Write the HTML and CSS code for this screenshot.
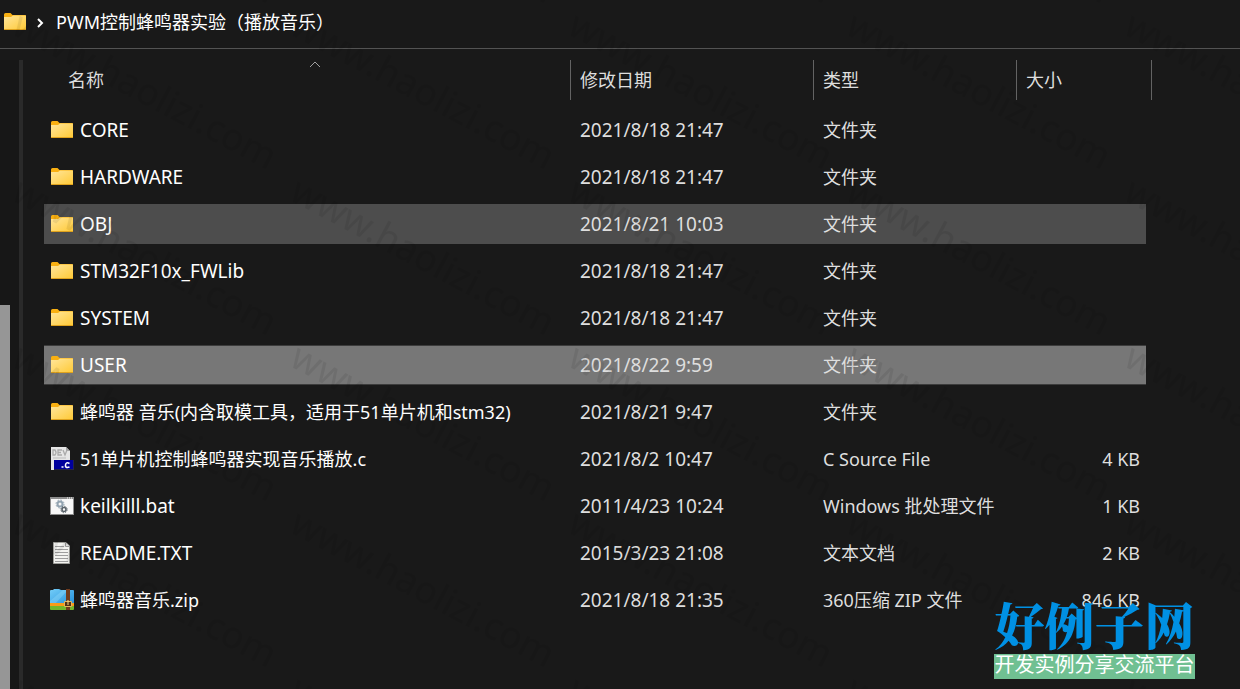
FILE: index.html
```html
<!DOCTYPE html>
<html lang="zh-CN">
<head>
  <meta charset="UTF-8" />
  <meta name="viewport" content="width=device-width, initial-scale=1.0"/>
  <title>PWM控制蜂鸣器实验（播放音乐）</title>
  <link rel="stylesheet" href="styles.css">
</head>
<body>
  <svg class="sprite" aria-hidden="true">
    <defs>
      <linearGradient id="folderFill" x1="0" y1="0" x2="1" y2="1">
        <stop offset="0" stop-color="#ffe69c"/>
        <stop offset="1" stop-color="#ffca38"/>
      </linearGradient>
      <linearGradient id="zipFill" x1="0" y1="0" x2="1" y2="1">
        <stop offset="0" stop-color="#74cdf8"/>
        <stop offset="1" stop-color="#2190dc"/>
      </linearGradient>
      <symbol id="folder" viewBox="0 0 24 24">
        <path d="M1 4.500Q1 3 2.500 3H7.500L9.500 5H22Q23 5 23 6V19H1Z" fill="#f9b012"/>
        <path d="M1 7H8L10 5.500H23V19H1Z" fill="url(#folderFill)"/>
        <path d="M1 19.500H23" stroke="#dfa21d"/>
      </symbol>
      <symbol id="csource" viewBox="0 0 24 24">
        <path d="M1 0H16L20 4V23H1Z" fill="#e6e6e6"/>
        <path d="M16 0V4H20Z" fill="#a5a5a5"/>
        <path d="M3 3v5h2q2-2.500 0-5zM12 3H8v5h4M8 5.500h3M13 3l2 5 2-5" fill="none" stroke="#aaa" stroke-width="1.300"/>
        <path d="M3 11H16" stroke="#bbb"/>
        <path d="M4 13H24V23H4Z" fill="#00009c"/>
        <path d="M4 22.500H24M23.500 13V23" stroke="#24244a"/>
        <path d="M19.500 16.500Q16 14.500 15.500 18T19.500 20M11.500 20H13.500" fill="none" stroke="#fff" stroke-width="1.600"/>
      </symbol>
      <symbol id="batch" viewBox="0 0 24 24">
        <path d="M0 3H24V21H0Z" fill="#8d8d8d"/>
        <path d="M1 5H23V20H1Z" fill="#f8f8f8"/>
        <path d="M17 4h1M19 4h1M21 4h1" stroke="#fff"/>
        <circle cx="10" cy="10" r="2.500" fill="none" stroke="#93a4b1" stroke-width="2"/>
        <circle cx="10" cy="10" r="4" fill="none" stroke="#93a4b1" stroke-dasharray="1.600 1.540"/>
        <circle cx="14" cy="15.500" r="2" fill="none" stroke="#596269" stroke-width="1.600"/>
        <circle cx="14" cy="15.500" r="3.200" fill="none" stroke="#596269" stroke-dasharray="1.300 1.200"/>
      </symbol>
      <symbol id="text" viewBox="0 0 24 24">
        <path d="M3.500 1.500H16L19.500 5V22.500H3.500Z" fill="#f3f3f0" stroke="#a0a09c"/>
        <path d="M15.500 1.500V5.500H19.500" fill="#ddd" stroke="#999"/>
        <path d="M5 5.500H14M5 8.500H18M5 11.500H18M5 14.500H18M5 17.500H18M5 20.500H18" stroke="#9e9e9e"/>
      </symbol>
      <symbol id="zip" viewBox="0 0 24 24">
        <path d="M0 3Q0 2 1 2H3L4 1H9L11 2H23Q24 2 24 3V17H0Z" fill="url(#zipFill)"/>
        <path d="M0 13L13 2H18L4 17H0Z" fill="#9adffc" opacity=".35"/>
        <path d="M0 15H24V19H0Z" fill="#f99b18"/>
        <path d="M0 18H24V21Q24 22 23 22H1Q0 22 0 21Z" fill="#73b52b"/>
        <path d="M16 1H20V22H16Z" fill="#713b1d"/>
        <path d="M14.500 13.500H21.500V18.500H14.500Z" fill="#533016" stroke="#e5b65e"/>
        <path d="M18 12V17" stroke="#f8d98a"/>
      </symbol>
    </defs>
  </svg>

  <nav class="address" aria-label="地址">
    <svg class="icon" aria-hidden="true"><use href="#folder"/></svg>
    <svg class="chevron" viewBox="0 0 8 10" aria-hidden="true"><path d="M2 1L6 5L2 9"/></svg>
    <a href="#">PWM控制蜂鸣器实验（播放音乐）</a>
  </nav>

  <main class="explorer">
    <aside class="side"><div class="thumb"></div></aside>
    <table class="files">
      <colgroup>
        <col><col class="col-date"><col class="col-type"><col class="col-size">
      </colgroup>
      <thead>
        <tr>
          <th>
            <button type="button" class="first">名称
              <svg class="sort" viewBox="0 0 12 7" aria-hidden="true"><path d="M1 6L6 1L11 6"/></svg>
            </button>
          </th>
          <th><button type="button">修改日期</button></th>
          <th><button type="button">类型</button></th>
          <th><button type="button" class="last">大小</button></th>
        </tr>
      </thead>
      <tbody>
        <tr>
          <td><a href="#" class="latin"><svg class="icon" aria-hidden="true"><use href="#folder"/></svg>CORE</a></td>
          <td class="latin">2021/8/18 21:47</td><td>文件夹</td><td></td>
        </tr>
        <tr>
          <td><a href="#" class="latin"><svg class="icon" aria-hidden="true"><use href="#folder"/></svg>HARDWARE</a></td>
          <td class="latin">2021/8/18 21:47</td><td>文件夹</td><td></td>
        </tr>
        <tr class="hover">
          <td><a href="#" class="latin"><svg class="icon" aria-hidden="true"><use href="#folder"/></svg>OBJ</a></td>
          <td class="latin">2021/8/21 10:03</td><td>文件夹</td><td></td>
        </tr>
        <tr>
          <td><a href="#" class="latin"><svg class="icon" aria-hidden="true"><use href="#folder"/></svg>STM32F10x_FWLib</a></td>
          <td class="latin">2021/8/18 21:47</td><td>文件夹</td><td></td>
        </tr>
        <tr>
          <td><a href="#" class="latin"><svg class="icon" aria-hidden="true"><use href="#folder"/></svg>SYSTEM</a></td>
          <td class="latin">2021/8/18 21:47</td><td>文件夹</td><td></td>
        </tr>
        <tr class="selected">
          <td><a href="#" class="latin"><svg class="icon" aria-hidden="true"><use href="#folder"/></svg>USER</a></td>
          <td class="latin">2021/8/22 9:59</td><td>文件夹</td><td></td>
        </tr>
        <tr>
          <td><a href="#"><svg class="icon" aria-hidden="true"><use href="#folder"/></svg>蜂鸣器 音乐(内含取模工具，适用于51单片机和stm32)</a></td>
          <td class="latin">2021/8/21 9:47</td><td>文件夹</td><td></td>
        </tr>
        <tr>
          <td><a href="#"><svg class="icon" aria-hidden="true"><use href="#csource"/></svg>51单片机控制蜂鸣器实现音乐播放.c</a></td>
          <td class="latin">2021/8/2 10:47</td><td>C Source File</td><td>4 KB</td>
        </tr>
        <tr>
          <td><a href="#" class="latin"><svg class="icon" aria-hidden="true"><use href="#batch"/></svg>keilkilll.bat</a></td>
          <td class="latin">2011/4/23 10:24</td><td>Windows 批处理文件</td><td>1 KB</td>
        </tr>
        <tr>
          <td><a href="#" class="latin"><svg class="icon" aria-hidden="true"><use href="#text"/></svg>README.TXT</a></td>
          <td class="latin">2015/3/23 21:08</td><td>文本文档</td><td>2 KB</td>
        </tr>
        <tr>
          <td><a href="#"><svg class="icon" aria-hidden="true"><use href="#zip"/></svg>蜂鸣器音乐.zip</a></td>
          <td class="latin">2021/8/18 21:35</td><td>360压缩 ZIP 文件</td><td>846 KB</td>
        </tr>
      </tbody>
    </table>
  </main>

  <svg class="watermark" aria-hidden="true">
    <defs>
      <pattern id="mark" x="8" y="5" width="278" height="166" patternUnits="userSpaceOnUse">
        <text x="0" y="0" transform="translate(2 28) rotate(28)">www.haolizi.com</text>
      </pattern>
    </defs>
    <rect width="100%" height="100%" fill="url(#mark)"/>
  </svg>

  <div class="brand">
    <strong>好例子网</strong>
    <span>开发实例分享交流平台</span>
  </div>
</body>
</html>
```

FILE: styles.css
```css
* {
  box-sizing: border-box;
}
body {
  margin: 0;
  min-height: 100vh;
  display: flex;
  flex-direction: column;
  position: relative;
  overflow-x: hidden;
  background: #191919;
  color: #dedede;
  font-family: "Noto Sans", "Noto Sans CJK SC", sans-serif;
  font-size: 18px;
  line-height: 24px;
}
a {
  color: #fff;
  text-decoration: none;
}
.sprite {
  position: absolute;
  width: 0;
  height: 0;
}
.icon {
  width: 24px;
  height: 24px;
  flex: none;
}
.address {
  display: flex;
  align-items: center;
  height: 49px;
  padding: 0 3px 4px;
  border-bottom: 1px solid #535353;
}
.chevron {
  width: 8px;
  height: 10px;
  margin: 2px 12px 0 9px;
  fill: none;
  stroke: #fff;
  stroke-width: 2;
}
.explorer {
  flex: 1;
  display: flex;
  align-items: stretch;
}
.side {
  flex: none;
  display: flex;
  align-items: flex-end;
  width: 23px;
  margin-top: 11px;
  background: #171717;
  border-right: 4px solid #2a2a2a;
}
.thumb {
  width: 10px;
  height: 61%;
  background: #969696;
}
.files {
  flex: 1;
  align-self: flex-start;
  width: 100%;
  table-layout: fixed;
  margin: 4px 94px 0 21px;
  border-collapse: separate;
  border-spacing: 0 7px;
}
.col-date {
  width: 243px;
}
.col-type {
  width: 203px;
}
.col-size {
  width: 130px;
}
th {
  height: 43px;
  padding: 0;
  vertical-align: top;
}
th button {
  position: relative;
  display: block;
  width: 100%;
  height: 40px;
  padding: 0 9px;
  border: 0;
  border-left: 1px solid #636363;
  background: none;
  color: #dedede;
  font: inherit;
  font-weight: normal;
  text-align: left;
}
th .first {
  padding-left: 24px;
  border-left: 0;
}
th .last {
  width: 136px;
  border-right: 1px solid #636363;
}
.sort {
  position: absolute;
  top: 1px;
  left: 50%;
  width: 12px;
  height: 7px;
  margin-left: 2px;
  fill: none;
  stroke: #a0a0a0;
}
td {
  height: 40px;
  padding: 0 6px 0 10px;
  white-space: nowrap;
}
td:first-child {
  padding-left: 6px;
}
td:last-child {
  text-align: right;
}
td a {
  display: flex;
  align-items: center;
  gap: 6px;
}
.latin {
  font-size: 19px;
}
.hover td {
  background: #4d4d4d;
}
.selected td {
  background: #777;
  border-top: 1px solid #3c3c3c;
  border-bottom: 1px solid #3c3c3c;
}
.watermark {
  position: absolute;
  inset: 0;
  width: 100%;
  height: 100%;
  pointer-events: none;
  font-size: 37px;
  opacity: 0.07;
}
.brand {
  position: absolute;
  right: 45px;
  bottom: 10px;
  width: 201px;
  text-align: center;
  white-space: nowrap;
}
.brand strong {
  display: block;
  color: #0090e3;
  font-family: "Noto Serif CJK SC", "Noto Sans CJK SC", serif;
  font-size: 50px;
  font-weight: 900;
  line-height: 54px;
  padding-bottom: 4px;
}
.brand span {
  display: block;
  height: 25px;
  background: #70c092;
  color: #fff;
  font-size: 20px;
  line-height: 22px;
}
```
